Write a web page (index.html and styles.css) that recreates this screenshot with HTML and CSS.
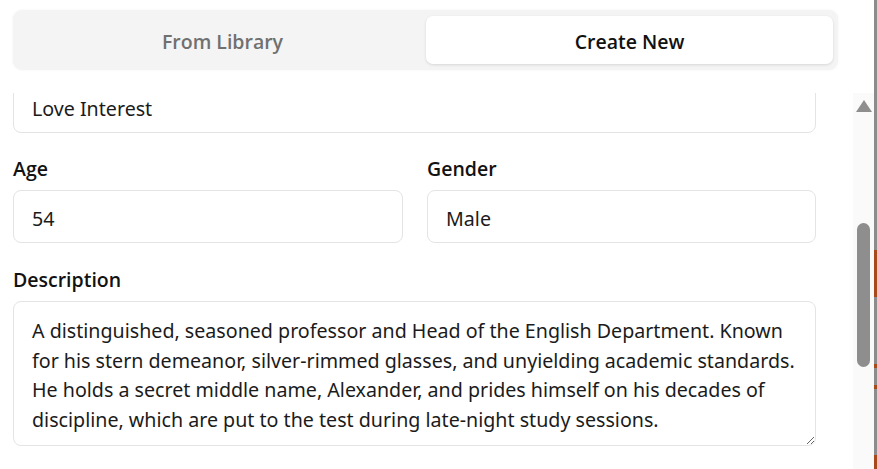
FILE: index.html
```html
<!DOCTYPE html>
<html lang="en">
<head>
<meta charset="utf-8">
<title>Create Character</title>
<link rel="stylesheet" href="styles.css">
</head>
<body>
<div class="window">
  <div class="panel">
    <header class="header">
      <div class="tabs">
        <button class="tab">From Library</button>
        <button class="tab active">Create New</button>
      </div>
    </header>
    <div class="body">
      <div class="scroll">
        <form class="form">
          <div class="field">
            <input class="input" type="text" value="Love Interest">
          </div>
          <div class="row">
            <div class="field">
              <label class="label">Age</label>
              <input class="input" type="text" value="54">
            </div>
            <div class="field">
              <label class="label">Gender</label>
              <input class="input" type="text" value="Male">
            </div>
          </div>
          <div class="field">
            <label class="label">Description</label>
            <textarea class="textarea">A distinguished, seasoned professor and Head of the English Department. Known
for his stern demeanor, silver-rimmed glasses, and unyielding academic standards.
He holds a secret middle name, Alexander, and prides himself on his decades of
discipline, which are put to the test during late-night study sessions.</textarea>
          </div>
        </form>
      </div>
      <div class="scrollbar">
        <div class="arrow"></div>
        <div class="thumb"></div>
      </div>
    </div>
  </div>
  <div class="edge"></div>
</div>
</body>
</html>
```

FILE: styles.css
```css
* { box-sizing: border-box; }
html, body { margin: 0; padding: 0; background: #ffffff; }
body {
  font-family: "Segoe UI", "Noto Sans", "Open Sans", sans-serif;
  color: #1b1b1b;
  width: 877px;
  height: 469px;
  overflow: hidden;
}
.window { display: flex; height: 469px; }
.panel { width: 874px; display: flex; flex-direction: column; background: #fff; }
.edge {
  width: 3px;
  background: linear-gradient(to bottom,
    #8c8c8c 0, #8c8c8c 250px,
    #a8491c 250px, #a8491c 297px,
    #8c8c8c 297px, #8c8c8c 364px,
    #a8491c 364px, #a8491c 368px,
    #8c8c8c 368px, #8c8c8c 385px,
    #a8491c 385px, #a8491c 389px,
    #8c8c8c 389px, #8c8c8c 455px,
    #a8491c 455px, #a8491c 469px);
}
.header { height: 93px; padding: 10px 0 0 13px; }
.tabs {
  width: 825px;
  height: 60px;
  padding: 6px 5px 6px 6px;
  background: #f4f4f4;
  border-radius: 9px;
  box-shadow: 0 0 3px rgba(0,0,0,0.05);
  display: grid;
  grid-template-columns: 1fr 1fr;
}
.tab {
  border: 0;
  background: transparent;
  font-family: "Segoe UI", "Open Sans", "Noto Sans", sans-serif;
  font-size: 19.5px;
  font-weight: 600;
  color: #707070;
  border-radius: 7px;
  cursor: pointer;
  padding: 2px 0 0;
}
.tab.active {
  background: #ffffff;
  color: #111111;
  box-shadow: 0 1px 3px rgba(0,0,0,0.12);
}
.body { flex: 1; display: flex; min-height: 0; }
.scroll { width: 853px; overflow: hidden; padding-left: 13px; }
.form {
  width: 803px;
  margin-top: -13px;
  display: flex;
  flex-direction: column;
  gap: 22px;
}
.row { display: grid; grid-template-columns: 390px 389px; gap: 24px; margin-bottom: 1px; }
.field { display: flex; flex-direction: column; }
.label {
  font-family: "Segoe UI", "Open Sans", "Noto Sans", sans-serif;
  font-size: 19.5px;
  font-weight: 600;
  line-height: 28px;
  margin-bottom: 7px;
  color: #121212;
}
.input {
  height: 53px;
  border: 1px solid #e4e4e4;
  border-radius: 8px;
  padding: 4px 18px 0;
  font-family: inherit;
  font-size: 19.65px;
  color: #1b1b1b;
  background: #fff;
  outline: none;
}
.textarea {
  height: 145px;
  border: 1px solid #e4e4e4;
  border-radius: 8px;
  padding: 14px 18px 9px;
  font-family: inherit;
  font-size: 19.65px;
  line-height: 29.7px;
  color: #1b1b1b;
  background: #fff;
  resize: vertical;
  white-space: pre;
  overflow: hidden;
  outline: none;
}
.scrollbar {
  width: 21px;
  background: #fafafa;
  position: relative;
}
.arrow {
  position: absolute;
  left: 3px;
  top: 7px;
  width: 0;
  height: 0;
  border-left: 8px solid transparent;
  border-right: 8px solid transparent;
  border-bottom: 12px solid #8e8e8e;
}
.thumb {
  position: absolute;
  left: 4px;
  top: 130px;
  width: 13px;
  height: 144px;
  border-radius: 7px;
  background: #8e8e8e;
}
```
